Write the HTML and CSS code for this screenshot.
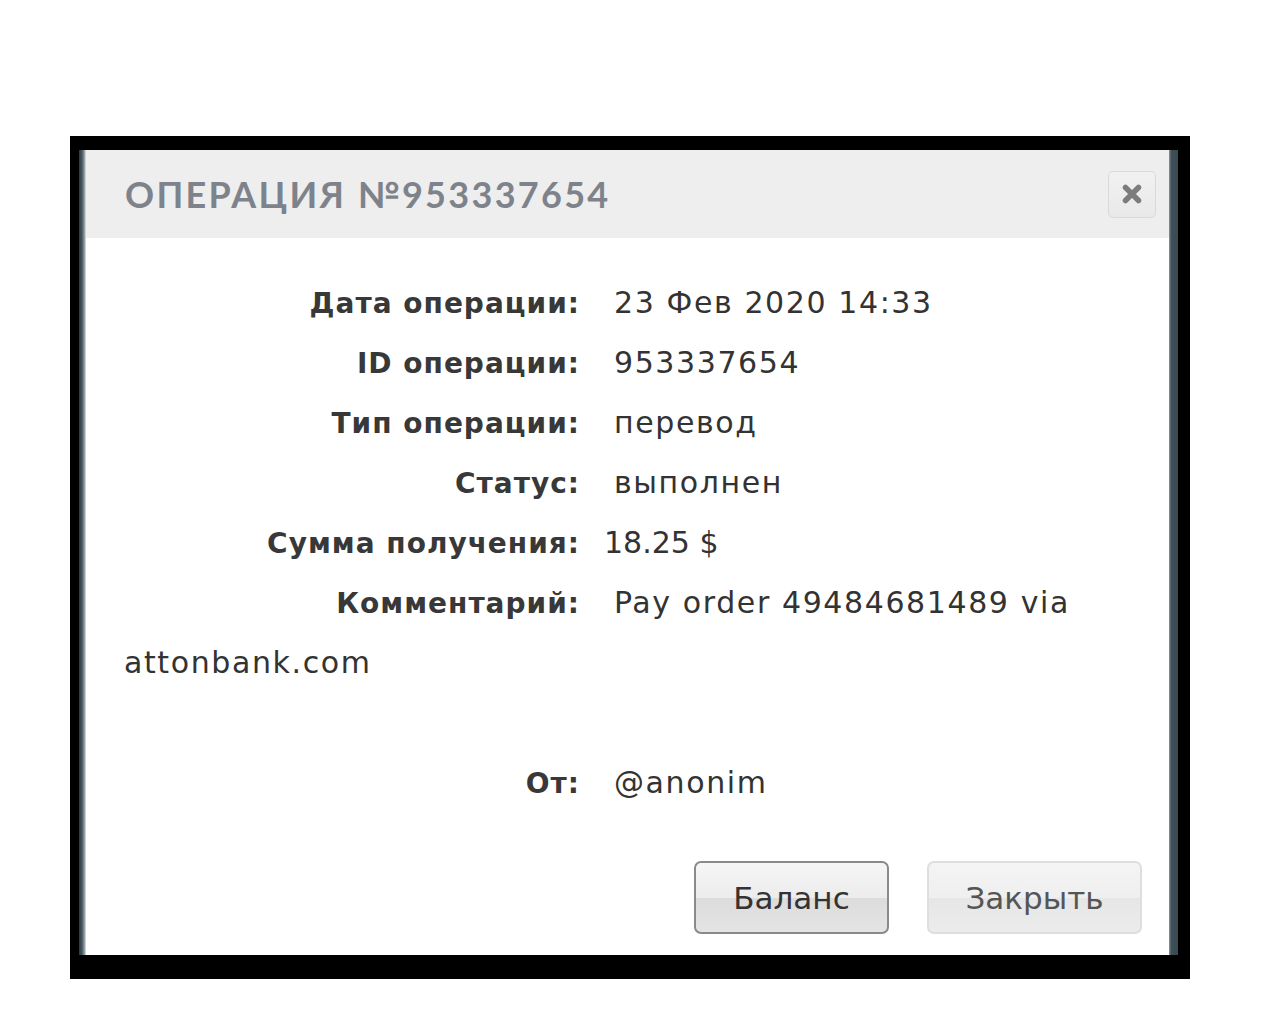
FILE: index.html
```html
<!DOCTYPE html>
<html lang="ru">
<head>
<meta charset="utf-8">
<title>Операция №953337654</title>
<link rel="stylesheet" href="styles.css">
</head>
<body>
<div class="page">
  <div class="frame">
    <div class="dialog">
      <div class="stripe-l"></div>
      <div class="main">
        <div class="header">
          <h1 class="title">Операция №953337654</h1>
          <button class="close" type="button" aria-label="Закрыть">
            <svg width="22" height="22" viewBox="0 0 22 22"><path d="M4.5 4.5 L17.5 17.5 M17.5 4.5 L4.5 17.5" stroke="#7c7c7c" stroke-width="5.5" stroke-linecap="round"/></svg>
          </button>
        </div>
        <div class="body">
          <div class="info">
            <div class="row"><span class="label">Дата операции:</span><span class="value">23 Фев 2020 14:33</span></div>
            <div class="row"><span class="label">ID операции:</span><span class="value">953337654</span></div>
            <div class="row"><span class="label">Тип операции:</span><span class="value">перевод</span></div>
            <div class="row"><span class="label">Статус:</span><span class="value">выполнен</span></div>
            <div class="row"><span class="label">Сумма получения:</span><span class="value shifted">18.25 $</span></div>
            <div class="row"><span class="label">Комментарий:</span><span class="value">Pay order 49484681489 via </span><span class="value">attonbank.com</span></div>
            <div class="row empty"></div>
            <div class="row"><span class="label">От:</span><span class="value">@anonim</span></div>
          </div>
          <div class="actions">
            <button class="btn btn-primary" type="button">Баланс</button>
            <button class="btn btn-secondary" type="button">Закрыть</button>
          </div>
        </div>
      </div>
      <div class="stripe-r"></div>
    </div>
  </div>
</div>
</body>
</html>
```
FILE: styles.css
```css
html, body {
  margin: 0;
  padding: 0;
  background: #ffffff;
}

.page {
  padding: 136px 0 0 70px;
}

.frame {
  width: 1120px;
  height: 843px;
  box-sizing: border-box;
  background: #000000;
  padding: 14px 12px 24px 9px;
}

.dialog {
  display: flex;
  height: 100%;
  background: #ffffff;
}

.stripe-l {
  width: 7px;
  flex: none;
  background: linear-gradient(to right, #2c383e 0%, #4a5a62 45%, #9aa4a9 80%, #e6e9ea 100%);
}

.stripe-r {
  width: 9px;
  flex: none;
  background: linear-gradient(to right, #8c979c 0%, #3f4f57 25%, #3a4a52 100%);
}

.main {
  flex: 1;
  display: flex;
  flex-direction: column;
  min-width: 0;
}

.header {
  height: 88px;
  flex: none;
  background: #eeeeee;
  display: flex;
  align-items: center;
  justify-content: space-between;
  padding: 0 13px 0 39px;
}

.title {
  margin: 0;
  font-family: "Lato", "DejaVu Sans", sans-serif;
  font-weight: 700;
  font-size: 36px;
  letter-spacing: 2.3px;
  text-transform: uppercase;
  color: #7e838b;
}

.close {
  width: 48px;
  height: 47px;
  padding: 0;
  border: 1px solid #d9d9d9;
  border-radius: 5px;
  background: linear-gradient(#f1f1f1, #e9e9e9);
  display: flex;
  align-items: center;
  justify-content: center;
  cursor: pointer;
}

.body {
  flex: 1;
  padding: 35px 40px 21px 38px;
  display: flex;
  flex-direction: column;
  font-family: "DejaVu Sans", sans-serif;
  font-size: 30px;
  color: #333333;
}

.info {
  line-height: 60px;
}

.row {
  min-height: 60px;
}

.label {
  display: inline-block;
  width: 456px;
  margin-right: 34px;
  text-align: right;
  font-size: 28px;
  line-height: 36px;
  font-weight: 700;
  letter-spacing: 1px;
  color: #383838;
}

.value {
  color: #333333;
  letter-spacing: 1.6px;
}

.value.shifted {
  margin-left: -10px;
  letter-spacing: 0;
}

.actions {
  margin-top: auto;
  display: flex;
  justify-content: flex-end;
  gap: 38px;
  margin-right: -13px;
}

.btn {
  height: 73px;
  font-family: "DejaVu Sans", sans-serif;
  font-size: 31px;
  border-radius: 7px;
  cursor: pointer;
}

.btn-primary {
  width: 195px;
  color: #333333;
  border: 2px solid #8a8a8a;
  background: linear-gradient(#f6f6f6 0%, #ececec 50%, #dcdcdc 51%, #e4e4e4 100%);
}

.btn-secondary {
  width: 215px;
  color: #555555;
  border: 2px solid #dedede;
  background: linear-gradient(#f4f4f4 0%, #efefef 50%, #e6e6e6 51%, #ececec 100%);
}
```
